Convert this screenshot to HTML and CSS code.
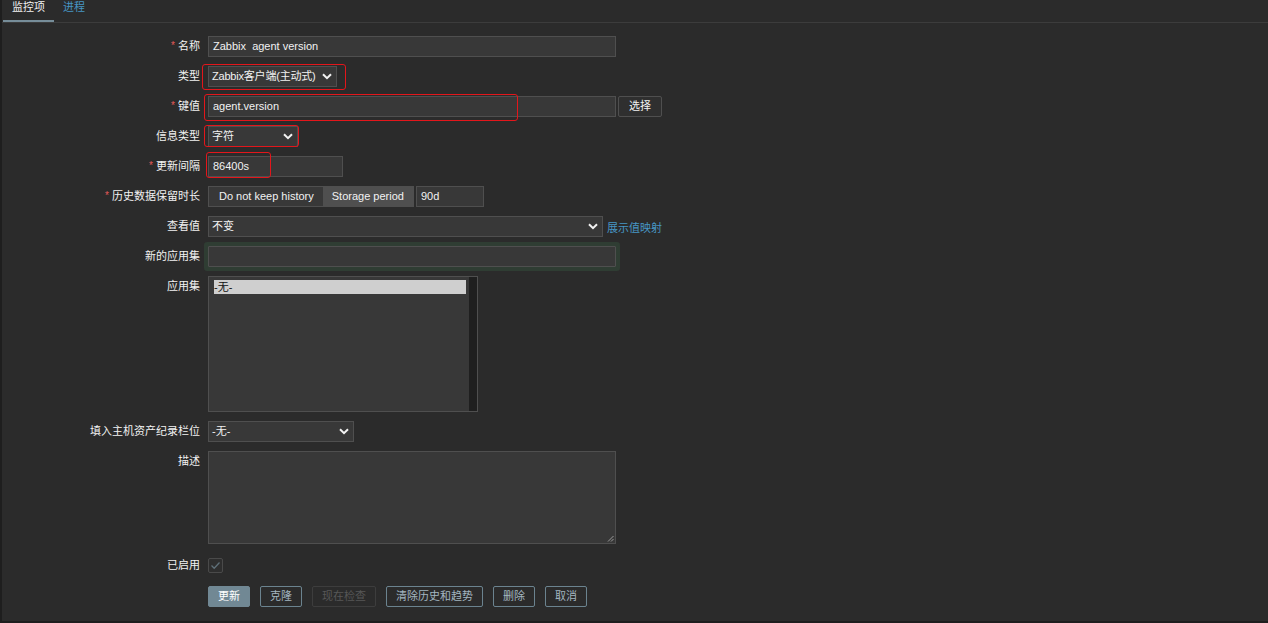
FILE: index.html
```html
<!DOCTYPE html>
<html lang="zh">
<head>
<meta charset="utf-8">
<title>监控项</title>
<link rel="stylesheet" href="styles.css">
</head>
<body>
<div class="page">
  <ul class="tabs">
    <li class="tab active">监控项</li>
    <li class="tab"><a class="tab-link">进程</a></li>
  </ul>
  <div class="form">
    <div class="label"><span class="req">*</span>名称</div>
    <div class="field"><div class="input w408">Zabbix&nbsp; agent version</div></div>

    <div class="label">类型</div>
    <div class="field">
      <div class="select w129 hl"><span class="sel-text tight">Zabbix客户端(主动式)</span><svg class="chev" width="10" height="7" viewBox="0 0 10 7"><path d="M1 1.2 L5 5.2 L9 1.2" stroke="#f2f2f2" stroke-width="2" fill="none"/></svg><span class="mark mark-type"></span></div>
    </div>

    <div class="label"><span class="req">*</span>键值</div>
    <div class="field row-key">
      <div class="input w408 hl">agent.version<span class="mark mark-key"></span></div>
      <div class="btn-plain">选择</div>
    </div>

    <div class="label">信息类型</div>
    <div class="field">
      <div class="select w90 hl"><span class="sel-text">字符</span><svg class="chev" width="10" height="7" viewBox="0 0 10 7"><path d="M1 1.2 L5 5.2 L9 1.2" stroke="#f2f2f2" stroke-width="2" fill="none"/></svg><span class="mark mark-info"></span></div>
    </div>

    <div class="label"><span class="req">*</span>更新间隔</div>
    <div class="field"><div class="input w135 hl">86400s<span class="mark mark-int"></span></div></div>

    <div class="label"><span class="req">*</span>历史数据保留时长</div>
    <div class="field row-hist">
      <div class="seg">
        <div class="seg-btn">Do not keep history</div>
        <div class="seg-btn on">Storage period</div>
      </div>
      <div class="input w68">90d</div>
    </div>

    <div class="label">查看值</div>
    <div class="field row-view">
      <div class="select w395"><span class="sel-text">不变</span><svg class="chev" width="10" height="7" viewBox="0 0 10 7"><path d="M1 1.2 L5 5.2 L9 1.2" stroke="#f2f2f2" stroke-width="2" fill="none"/></svg></div>
      <a class="link">展示值映射</a>
    </div>

    <div class="label">新的应用集</div>
    <div class="field"><div class="input w408 focus"></div></div>

    <div class="label">应用集</div>
    <div class="field">
      <div class="listbox">
        <div class="list-items"><div class="opt sel">-无-</div></div>
        <div class="list-scroll"></div>
      </div>
    </div>

    <div class="label">填入主机资产纪录栏位</div>
    <div class="field">
      <div class="select w146"><span class="sel-text">-无-</span><svg class="chev" width="10" height="7" viewBox="0 0 10 7"><path d="M1 1.2 L5 5.2 L9 1.2" stroke="#f2f2f2" stroke-width="2" fill="none"/></svg></div>
    </div>

    <div class="label">描述</div>
    <div class="field">
      <div class="textarea"><svg class="grip" width="7" height="7" viewBox="0 0 7 7"><path d="M6.5 1 L1 6.5 M6.5 4 L4 6.5" stroke="#9a9a9a" stroke-width="1"/></svg></div>
    </div>

    <div class="label label-check">已启用</div>
    <div class="field row-check">
      <span class="checkbox"><svg width="11" height="9" viewBox="0 0 11 9"><path d="M1.5 4.5 L4.2 7.2 L9.5 1.5" stroke="#5f7079" stroke-width="1.3" fill="none"/></svg></span>
    </div>

    <div class="label"></div>
    <div class="field buttons">
      <div class="btn primary">更新</div>
      <div class="btn">克隆</div>
      <div class="btn disabled">现在检查</div>
      <div class="btn">清除历史和趋势</div>
      <div class="btn">删除</div>
      <div class="btn">取消</div>
    </div>
  </div>
</div>
</body>
</html>
```

FILE: styles.css
```css
html, body {
  margin: 0;
  padding: 0;
  background: #1e1e1e;
}
body {
  font-family: "Liberation Sans", "Noto Sans CJK SC", sans-serif;
  font-size: 11px;
  color: #f2f2f2;
}
.page {
  margin-left: 2px;
  height: 621px;
  background: #2b2b2b;
}
.tabs {
  list-style: none;
  margin: 0;
  padding: 0 0 0 1px;
  height: 22px;
  display: flex;
  border-bottom: 1px solid #3c3c3c;
}
.tab {
  padding: 1px 9px 0;
  line-height: 13px;
  height: 22px;
  box-sizing: border-box;
  color: #f2f2f2;
}
.tab.active {
  border-bottom: 2px solid #768d99;
}
.tab-link {
  color: #4796c4;
}
.form {
  display: grid;
  grid-template-columns: 198px 1fr;
  column-gap: 8px;
  row-gap: 9px;
  padding-top: 13px;
}
.label {
  text-align: right;
  line-height: 21px;
  height: 21px;
  white-space: nowrap;
}
.req {
  color: #e45959;
  margin-right: 3px;
  font-size: 10px;
  position: relative;
  top: -1px;
}
.field {
  display: flex;
  align-items: flex-start;
}
.input, .select {
  box-sizing: border-box;
  height: 21px;
  line-height: 19px;
  background: #383838;
  border: 1px solid #4f4f4f;
  padding: 0 4px;
  color: #f2f2f2;
  white-space: pre;
}
.select {
  display: flex;
  align-items: center;
  justify-content: space-between;
  padding: 0 4px 0 3px;
}
.sel-text { white-space: nowrap; }
.tight { letter-spacing: -0.2px; }
.chev { flex: none; margin-left: 5px; }
.hl { position: relative; }
.w408 { width: 408px; }
.w129 { width: 129px; }
.w90 { width: 90px; }
.w135 { width: 135px; }
.w68 { width: 68px; }
.w395 { width: 395px; }
.w146 { width: 146px; }
.mark {
  position: absolute;
  border: 1px solid #e3161b;
  border-radius: 3px;
  box-sizing: border-box;
  pointer-events: none;
}
.mark-type { left: -7px; top: -3px; width: 144px; height: 26px; }
.mark-key { left: -5px; top: -3px; width: 314px; height: 27px; }
.mark-info { left: -5px; top: -2px; width: 95px; height: 22px; }
.mark-int { left: -3px; top: -5px; width: 65px; height: 26px; }
.row-key { gap: 2px; }
.btn-plain {
  box-sizing: border-box;
  height: 21px;
  line-height: 19px;
  width: 44px;
  text-align: center;
  border: 1px solid #4f4f4f;
  background: #2f2f2f;
  border-radius: 2px;
}
.row-hist { gap: 2px; }
.seg {
  display: flex;
  border: 1px solid #4f4f4f;
  height: 21px;
  box-sizing: border-box;
}
.seg-btn {
  line-height: 19px;
  padding: 0 9px 0 10px;
  background: #383838;
}
.seg-btn.on {
  padding: 0 9px;
  background: #4f4f4f;
}
.row-view { align-items: center; gap: 4px; }
.link { color: #4796c4; }
.focus {
  border-radius: 1px;
  box-shadow: 0 0 0 4px #2f3d33;
}
.listbox {
  box-sizing: border-box;
  width: 270px;
  height: 136px;
  border: 1px solid #4f4f4f;
  background: #383838;
  display: flex;
  justify-content: space-between;
}
.list-items {
  padding: 3px 0 0 5px;
  flex: 1;
}
.opt {
  height: 14px;
  line-height: 14px;
  width: 252px;
}
.opt.sel {
  background: #cfcfcf;
  color: #111;
}
.list-scroll {
  width: 8px;
  background: #1f1f1f;
}
.textarea {
  position: relative;
  box-sizing: border-box;
  width: 408px;
  height: 93px;
  border: 1px solid #4f4f4f;
  background: #383838;
}
.grip {
  position: absolute;
  right: 1px;
  bottom: 1px;
}
.label-check, .row-check {
  height: 24px;
  line-height: 24px;
  align-items: center;
}
.checkbox {
  box-sizing: border-box;
  width: 15px;
  height: 15px;
  border: 1px solid #4a4a4a;
  border-radius: 2px;
  background: #2e2e2e;
  display: flex;
  align-items: center;
  justify-content: center;
}
.buttons { gap: 10px; }
.btn {
  box-sizing: border-box;
  height: 21px;
  line-height: 19px;
  padding: 0 9px;
  border: 1px solid #6b838f;
  border-radius: 2px;
  color: #a3b6c0;
  white-space: nowrap;
}
.btn.primary {
  background: #718894;
  border-color: #718894;
  color: #ffffff;
}
.btn.disabled {
  border-color: #3d3d3d;
  color: #575757;
}
```
